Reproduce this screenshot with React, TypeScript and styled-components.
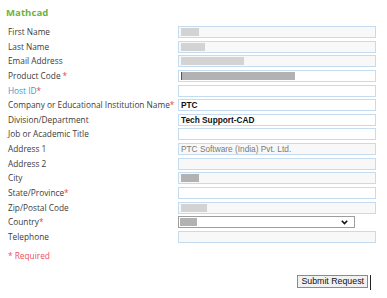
import React from 'react'
import styled, { createGlobalStyle } from 'styled-components'

const Global = createGlobalStyle`
  body {
    margin: 0;
    background: #ffffff;
    font-family: 'Open Sans', 'Liberation Sans', sans-serif;
  }
`

const Page = styled.div`
  width: 387px;
  height: 298px;
  padding: 6px 0 0 6px;
  box-sizing: border-box;
`

const Title = styled.h2`
  margin: 0 0 7px 0;
  font-size: 9.5px;
  line-height: 13px;
  font-weight: 700;
  color: #6ab43e;
  letter-spacing: 0.1px;
`

const Form = styled.div`
  display: grid;
  grid-template-columns: 170px 198px;
  row-gap: 2.65px;
  padding-left: 2px;
`

const Label = styled.div<{ $blue?: boolean }>`
  font-size: 8.3px;
  line-height: 12px;
  color: ${(p) => (p.$blue ? '#4496cc' : '#3b3b3b')};
  white-space: nowrap;
`

const Star = styled.span<{ $spaced?: boolean }>`
  color: #e8434f;
  margin-left: ${(p) => (p.$spaced ? '2px' : '0')};
`

const Field = styled.div<{ $filled?: boolean }>`
  height: 12px;
  box-sizing: border-box;
  border: 1px solid #c4dbf0;
  background: ${(p) => (p.$filled ? '#f8f8f8' : '#ffffff')};
  display: flex;
  align-items: center;
  padding-left: 2px;
  font-family: 'Liberation Sans', Arial, sans-serif;
  font-size: 8.3px;
  overflow: hidden;
`

const Value = styled.span<{ $muted?: boolean; $bold?: boolean }>`
  color: ${(p) => (p.$muted ? '#7a7a7a' : '#111111')};
  font-weight: ${(p) => (p.$bold ? 700 : 400)};
  white-space: nowrap;
`

const Blur = styled.span<{ $w: number; $dark?: boolean; $mark?: boolean }>`
  display: inline-block;
  width: ${(p) => p.$w}px;
  height: 8px;
  background: ${(p) => (p.$dark ? '#b2b2b2' : '#d3d3d3')};
  border-left: ${(p) => (p.$mark ? '1px solid #555' : 'none')};
`

const Select = styled.div`
  width: 177px;
  height: 12px;
  box-sizing: border-box;
  border: 1px solid #9d9d9d;
  background: #ffffff;
  display: flex;
  align-items: center;
  justify-content: space-between;
  padding: 0 6px 0 1px;
`

const Chevron = styled.svg`
  width: 7px;
  height: 5px;
`

const Required = styled.div`
  margin: 7px 0 0 2px;
  font-size: 8.3px;
  line-height: 12px;
  color: #ea4f5a;
`

const Actions = styled.div`
  display: flex;
  justify-content: flex-end;
  align-items: flex-start;
  width: 365px;
  margin-top: 13px;
`

const Button = styled.button`
  height: 13px;
  padding: 0 3px;
  border: 1px solid #8a8a8a;
  background: #f1f1f1;
  font-family: 'Liberation Sans', Arial, sans-serif;
  font-size: 8.8px;
  line-height: 11px;
  color: #111;
  cursor: pointer;
`

const Caret = styled.span`
  width: 1px;
  height: 15px;
  margin-left: 2px;
  background: #222;
`

type Row = {
  label: string
  required?: boolean
  spaced?: boolean
  blue?: boolean
  filled?: boolean
  content?: React.ReactNode
}

const rows: Row[] = [
  { label: 'First Name', filled: true, content: <Blur $w={18} /> },
  { label: 'Last Name', filled: true, content: <Blur $w={24} /> },
  { label: 'Email Address', filled: true, content: <Blur $w={63} /> },
  { label: 'Product Code', required: true, spaced: true, content: <Blur $w={113} $dark $mark /> },
  { label: 'Host ID', required: true, blue: true },
  { label: 'Company or Educational Institution Name', required: true, content: <Value $bold>PTC</Value> },
  { label: 'Division/Department', content: <Value $bold>Tech Support-CAD</Value> },
  { label: 'Job or Academic Title' },
  { label: 'Address 1', filled: true, content: <Value $muted>PTC Software (India) Pvt. Ltd.</Value> },
  { label: 'Address 2', filled: true },
  { label: 'City', filled: true, content: <Blur $w={18} $dark /> },
  { label: 'State/Province', required: true },
  { label: 'Zip/Postal Code', filled: true, content: <Blur $w={26} /> },
]

export default function App() {
  return (
    <Page>
      <Global />
      <Title>Mathcad</Title>
      <Form>
        {rows.map((r) => (
          <React.Fragment key={r.label}>
            <Label $blue={r.blue}>
              {r.label}
              {r.required && <Star $spaced={r.spaced}>*</Star>}
            </Label>
            <Field $filled={r.filled}>{r.content}</Field>
          </React.Fragment>
        ))}
        <Label>
          Country<Star>*</Star>
        </Label>
        <Select>
          <Blur $w={17} $dark />
          <Chevron viewBox="0 0 7 5">
            <path d="M0.8 0.8 L3.5 3.6 L6.2 0.8" fill="none" stroke="#111" strokeWidth="1.6" />
          </Chevron>
        </Select>
        <Label>Telephone</Label>
        <Field $filled />
      </Form>
      <Required>* Required</Required>
      <Actions>
        <Button>Submit Request</Button>
        <Caret />
      </Actions>
    </Page>
  )
}
